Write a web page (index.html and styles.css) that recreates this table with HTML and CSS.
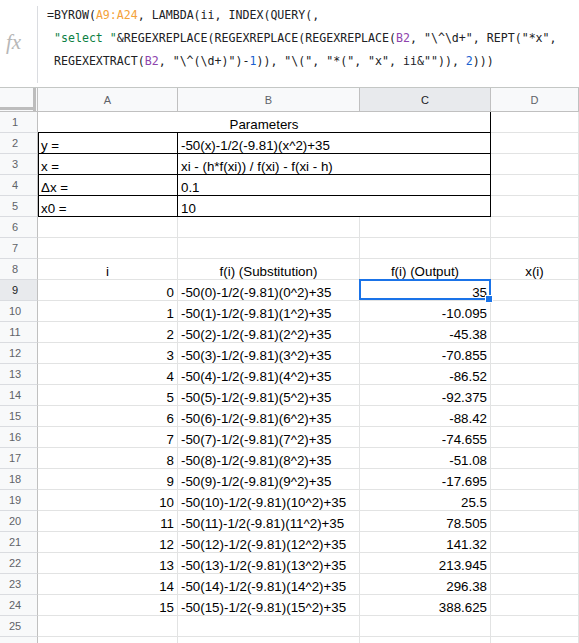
FILE: index.html
```html
<!DOCTYPE html>
<html>
<head>
<meta charset="utf-8">
<link rel="stylesheet" href="styles.css">
</head>
<body>
<div class="fbar">
  <div class="fx"><span>fx</span></div>
  <div class="formula">
    <div class="fl">=BYROW(<span class="rg">A9:A24</span>, LAMBDA(ii, INDEX(QUERY(,</div>
    <div class="fl"> <span class="str">"select "</span>&amp;REGEXREPLACE(REGEXREPLACE(REGEXREPLACE(<span class="ref">B2</span>, "\^\d+", REPT("*x",</div>
    <div class="fl"> REGEXEXTRACT(<span class="ref">B2</span>, "\^(\d+)")-<span class="num">1</span>)), "\(", "*(", "x", ii&amp;"")), <span class="num">2</span>)))</div>
  </div>
</div>
<div class="sheet">
  <div class="corner"></div>
  <div class="ch">A</div><div class="ch">B</div><div class="ch sel">C</div><div class="ch">D</div>

  <div class="rh">1</div><div class="c merged bb br center">Parameters</div><div class="c"></div>
  <div class="rh">2</div><div class="c bl bb br">y =</div><div class="c span2 bb br">-50(x)-1/2(-9.81)(x^2)+35</div><div class="c"></div>
  <div class="rh">3</div><div class="c bl bb br">x =</div><div class="c span2 bb br">xi - (h*f(xi)) / f(xi) - f(xi - h)</div><div class="c"></div>
  <div class="rh">4</div><div class="c bl bb br">Δx =</div><div class="c span2 bb br">0.1</div><div class="c"></div>
  <div class="rh">5</div><div class="c bl bb br">x0 =</div><div class="c span2 bb br">10</div><div class="c"></div>
  <div class="rh">6</div><div class="c"></div><div class="c"></div><div class="c"></div><div class="c"></div>
  <div class="rh">7</div><div class="c"></div><div class="c"></div><div class="c"></div><div class="c"></div>
  <div class="rh">8</div><div class="c center">i</div><div class="c center">f(i) (Substitution)</div><div class="c center">f(i) (Output)</div><div class="c center">x(i)</div>
  <div class="rh sel">9</div><div class="c right">0</div><div class="c">-50(0)-1/2(-9.81)(0^2)+35</div><div class="c right active">35</div><div class="c"></div>
  <div class="rh">10</div><div class="c right">1</div><div class="c">-50(1)-1/2(-9.81)(1^2)+35</div><div class="c right">-10.095</div><div class="c"></div>
  <div class="rh">11</div><div class="c right">2</div><div class="c">-50(2)-1/2(-9.81)(2^2)+35</div><div class="c right">-45.38</div><div class="c"></div>
  <div class="rh">12</div><div class="c right">3</div><div class="c">-50(3)-1/2(-9.81)(3^2)+35</div><div class="c right">-70.855</div><div class="c"></div>
  <div class="rh">13</div><div class="c right">4</div><div class="c">-50(4)-1/2(-9.81)(4^2)+35</div><div class="c right">-86.52</div><div class="c"></div>
  <div class="rh">14</div><div class="c right">5</div><div class="c">-50(5)-1/2(-9.81)(5^2)+35</div><div class="c right">-92.375</div><div class="c"></div>
  <div class="rh">15</div><div class="c right">6</div><div class="c">-50(6)-1/2(-9.81)(6^2)+35</div><div class="c right">-88.42</div><div class="c"></div>
  <div class="rh">16</div><div class="c right">7</div><div class="c">-50(7)-1/2(-9.81)(7^2)+35</div><div class="c right">-74.655</div><div class="c"></div>
  <div class="rh">17</div><div class="c right">8</div><div class="c">-50(8)-1/2(-9.81)(8^2)+35</div><div class="c right">-51.08</div><div class="c"></div>
  <div class="rh">18</div><div class="c right">9</div><div class="c">-50(9)-1/2(-9.81)(9^2)+35</div><div class="c right">-17.695</div><div class="c"></div>
  <div class="rh">19</div><div class="c right">10</div><div class="c">-50(10)-1/2(-9.81)(10^2)+35</div><div class="c right">25.5</div><div class="c"></div>
  <div class="rh">20</div><div class="c right">11</div><div class="c">-50(11)-1/2(-9.81)(11^2)+35</div><div class="c right">78.505</div><div class="c"></div>
  <div class="rh">21</div><div class="c right">12</div><div class="c">-50(12)-1/2(-9.81)(12^2)+35</div><div class="c right">141.32</div><div class="c"></div>
  <div class="rh">22</div><div class="c right">13</div><div class="c">-50(13)-1/2(-9.81)(13^2)+35</div><div class="c right">213.945</div><div class="c"></div>
  <div class="rh">23</div><div class="c right">14</div><div class="c">-50(14)-1/2(-9.81)(14^2)+35</div><div class="c right">296.38</div><div class="c"></div>
  <div class="rh">24</div><div class="c right">15</div><div class="c">-50(15)-1/2(-9.81)(15^2)+35</div><div class="c right">388.625</div><div class="c"></div>
  <div class="rh">25</div><div class="c"></div><div class="c"></div><div class="c"></div><div class="c"></div>
  <div class="rh"></div><div class="c"></div><div class="c"></div><div class="c"></div><div class="c"></div>
</div>
</body>
</html>
```
FILE: styles.css
```css
html, body {
  margin: 0;
  padding: 0;
  overflow: hidden;
  background: #fff;
}
body {
  width: 579px;
  height: 643px;
  font-family: "Liberation Sans", Arial, sans-serif;
}
.fbar {
  height: 88px;
  box-sizing: border-box;
  border-bottom: 1px solid #c4c7c5;
  display: flex;
}
.fx {
  width: 38px;
  box-sizing: border-box;
  display: flex;
  align-items: center;
  padding-left: 6px;
  padding-bottom: 2px;
  position: relative;
}
.fx::after {
  content: "";
  position: absolute;
  right: 0;
  top: 6px;
  bottom: 4px;
  width: 1px;
  background: #dadce0;
}
.fx span {
  font-family: "Liberation Serif", "Times New Roman", serif;
  font-style: italic;
  font-size: 21px;
  color: #b7b7b7;
}
.formula {
  padding: 4px 0 0 9px;
  font-family: "DejaVu Sans Mono", monospace;
  font-size: 11.6px;
  line-height: 23px;
  color: #202124;
}
.fl {
  white-space: pre;
}
.rg { color: #f4a23a; }
.str { color: #0b8043; }
.ref { color: #8e44ad; }
.num { color: #1a5fd0; }

.sheet {
  display: grid;
  grid-template-columns: 38px 140px 182px 131px 88px;
  grid-template-rows: 24px;
  grid-auto-rows: 21px;
  font-size: 13.33px;
  color: #000;
}
.corner {
  background: #f8f9fa;
  box-sizing: border-box;
  border-right: 1px solid #c0c0c0;
  border-bottom: 1px solid #c0c0c0;
  position: relative;
}
.corner::before {
  content: "";
  position: absolute;
  right: 1px;
  top: 0;
  bottom: 0;
  width: 3px;
  background: #bdbdbd;
}
.corner::after {
  content: "";
  position: absolute;
  left: 0;
  right: 1px;
  bottom: 1px;
  height: 3px;
  background: #bdbdbd;
}
.ch {
  background: #f8f9fa;
  box-sizing: border-box;
  border-right: 1px solid #c0c0c0;
  border-bottom: 1px solid #c0c0c0;
  display: flex;
  align-items: center;
  justify-content: center;
  font-size: 11px;
  color: #5f6368;
  padding-top: 1px;
}
.rh {
  background: #f8f9fa;
  box-sizing: border-box;
  border-right: 1px solid #c0c0c0;
  border-bottom: 1px solid #dadce0;
  display: flex;
  align-items: center;
  justify-content: center;
  font-size: 11px;
  color: #5f6368;
  padding-right: 7px;
}
.ch.sel, .rh.sel {
  background: #e8eaed;
  color: #202124;
}
.c {
  box-sizing: border-box;
  border-right: 1px solid #e2e3e3;
  border-bottom: 1px solid #e2e3e3;
  display: flex;
  align-items: flex-end;
  padding: 0 3px;
  line-height: 15px;
  white-space: nowrap;
  overflow: visible;
}
.merged { grid-column: span 3; }
.span2 { grid-column: span 2; }
.center { justify-content: center; }
.right { justify-content: flex-end; }
.bb { border-bottom-color: #000; }
.br { border-right-color: #000; }
.bl { box-shadow: inset 1px 0 0 #000; }
.active {
  position: relative;
}
.active::before {
  content: "";
  position: absolute;
  left: -1px;
  right: -1px;
  top: -1px;
  bottom: 0;
  border: 2px solid #1a73e8;
  z-index: 2;
}
.active::after {
  content: "";
  position: absolute;
  right: -3px;
  bottom: -3px;
  width: 6px;
  height: 6px;
  background: #1a73e8;
  border: 1px solid #fff;
  z-index: 3;
}
```
